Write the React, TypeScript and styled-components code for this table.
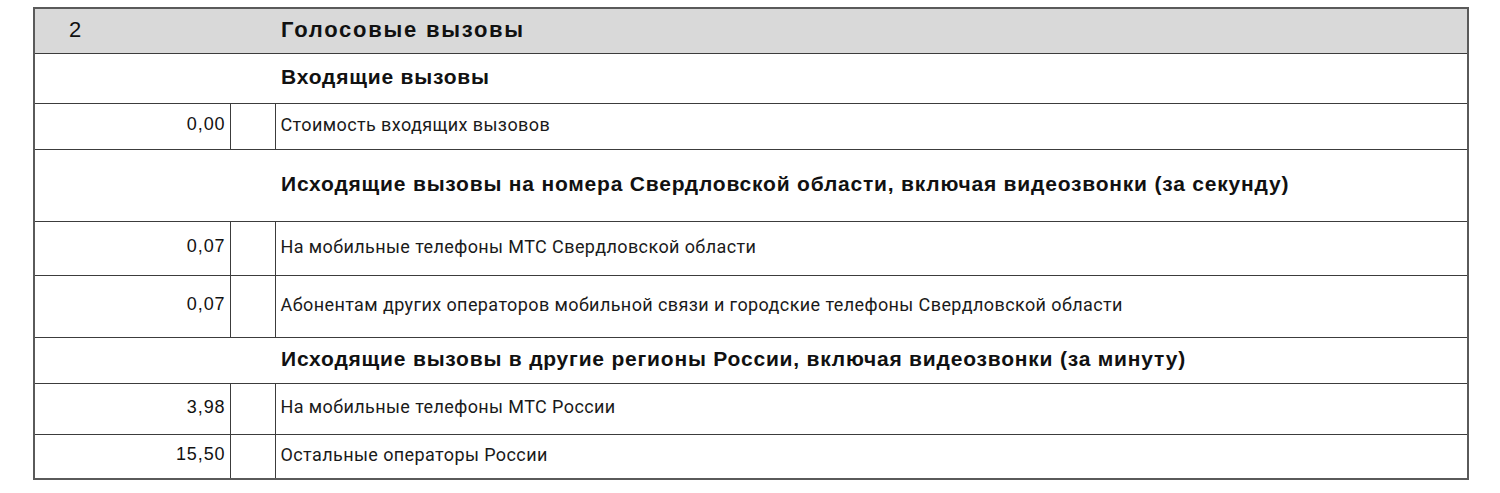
import React from 'react';
import styled, { createGlobalStyle } from 'styled-components';

const GlobalStyle = createGlobalStyle`
  body {
    margin: 0;
    background: #ffffff;
    font-family: "Liberation Sans", Arial, sans-serif;
    color: #111;
  }
`;

const Page = styled.div`
  padding: 7px 32px 0 33px;
`;

const Table = styled.table`
  width: 1436px;
  border-collapse: collapse;
  table-layout: fixed;
  border: 2px solid #5a5a5a;
`;

const Cell = styled.td`
  border: 1.5px solid #3c3c3c;
  padding: 0;
`;

const NumCell = styled(Cell)`
  text-align: right;
  padding: 0 4px 3px 0;
  font-family: "Liberation Sans", Arial, sans-serif;
  font-size: 18px;
  letter-spacing: 0.9px;
  color: #111;
`;

const GapCell = styled(Cell)``;

const TextCell = styled(Cell)`
  padding: 0 0 4px 5px;
  font-family: Roboto, "Noto Sans", sans-serif;
  font-size: 18px;
  letter-spacing: 0.4px;
  color: #1a1a1a;
`;

const SectionRow = styled.tr<{ $h: number; $gray?: boolean }>`
  height: ${(p) => p.$h}px;
  background: ${(p) => (p.$gray ? '#d9d9d9' : '#ffffff')};
`;

const HeadCell = styled(Cell)<{ $size: number }>`
  padding-bottom: 2px;
  font-family: "Liberation Sans", Arial, sans-serif;
  font-weight: bold;
  font-size: ${(p) => p.$size}px;
  color: #111;
`;

const HeadInner = styled.div<{ $spacing: number }>`
  display: flex;
  align-items: center;
  letter-spacing: ${(p) => p.$spacing}px;
`;

const Index = styled.span`
  width: 246px;
  padding-left: 34px;
  box-sizing: border-box;
  font-weight: normal;
  letter-spacing: 0;
`;

const Title = styled.span<{ $offset: number }>`
  margin-left: ${(p) => p.$offset}px;
`;

const DataRow = styled.tr<{ $h: number }>`
  height: ${(p) => p.$h}px;
`;

type Row =
  | { kind: 'section'; title: string; h: number }
  | { kind: 'data'; value: string; text: string; h: number };

const rows: Row[] = [
  { kind: 'section', title: 'Входящие вызовы', h: 50 },
  { kind: 'data', value: '0,00', text: 'Стоимость входящих вызовов', h: 46 },
  {
    kind: 'section',
    title: 'Исходящие вызовы на номера Свердловской области, включая видеозвонки (за секунду)',
    h: 72,
  },
  { kind: 'data', value: '0,07', text: 'На мобильные телефоны МТС Свердловской области', h: 54 },
  {
    kind: 'data',
    value: '0,07',
    text: 'Абонентам других операторов мобильной связи и городские телефоны Свердловской области',
    h: 62,
  },
  {
    kind: 'section',
    title: 'Исходящие вызовы в другие регионы России, включая видеозвонки (за минуту)',
    h: 46,
  },
  { kind: 'data', value: '3,98', text: 'На мобильные телефоны МТС России', h: 51 },
  { kind: 'data', value: '15,50', text: 'Остальные операторы России', h: 45 },
];

export default function App() {
  return (
    <>
      <GlobalStyle />
      <Page>
        <Table>
          <colgroup>
            <col style={{ width: 196 }} />
            <col style={{ width: 45 }} />
            <col />
          </colgroup>
          <tbody>
            <SectionRow $h={45} $gray>
              <HeadCell colSpan={3} $size={22}>
                <HeadInner $spacing={1.75}>
                  <Index>2</Index>
                  <Title $offset={0}>Голосовые вызовы</Title>
                </HeadInner>
              </HeadCell>
            </SectionRow>
            {rows.map((r, i) =>
              r.kind === 'section' ? (
                <SectionRow key={i} $h={r.h}>
                  <HeadCell colSpan={3} $size={21}>
                    <HeadInner $spacing={0.8}>
                      <Title $offset={246}>{r.title}</Title>
                    </HeadInner>
                  </HeadCell>
                </SectionRow>
              ) : (
                <DataRow key={i} $h={r.h}>
                  <NumCell>{r.value}</NumCell>
                  <GapCell />
                  <TextCell>{r.text}</TextCell>
                </DataRow>
              )
            )}
          </tbody>
        </Table>
      </Page>
    </>
  );
}
